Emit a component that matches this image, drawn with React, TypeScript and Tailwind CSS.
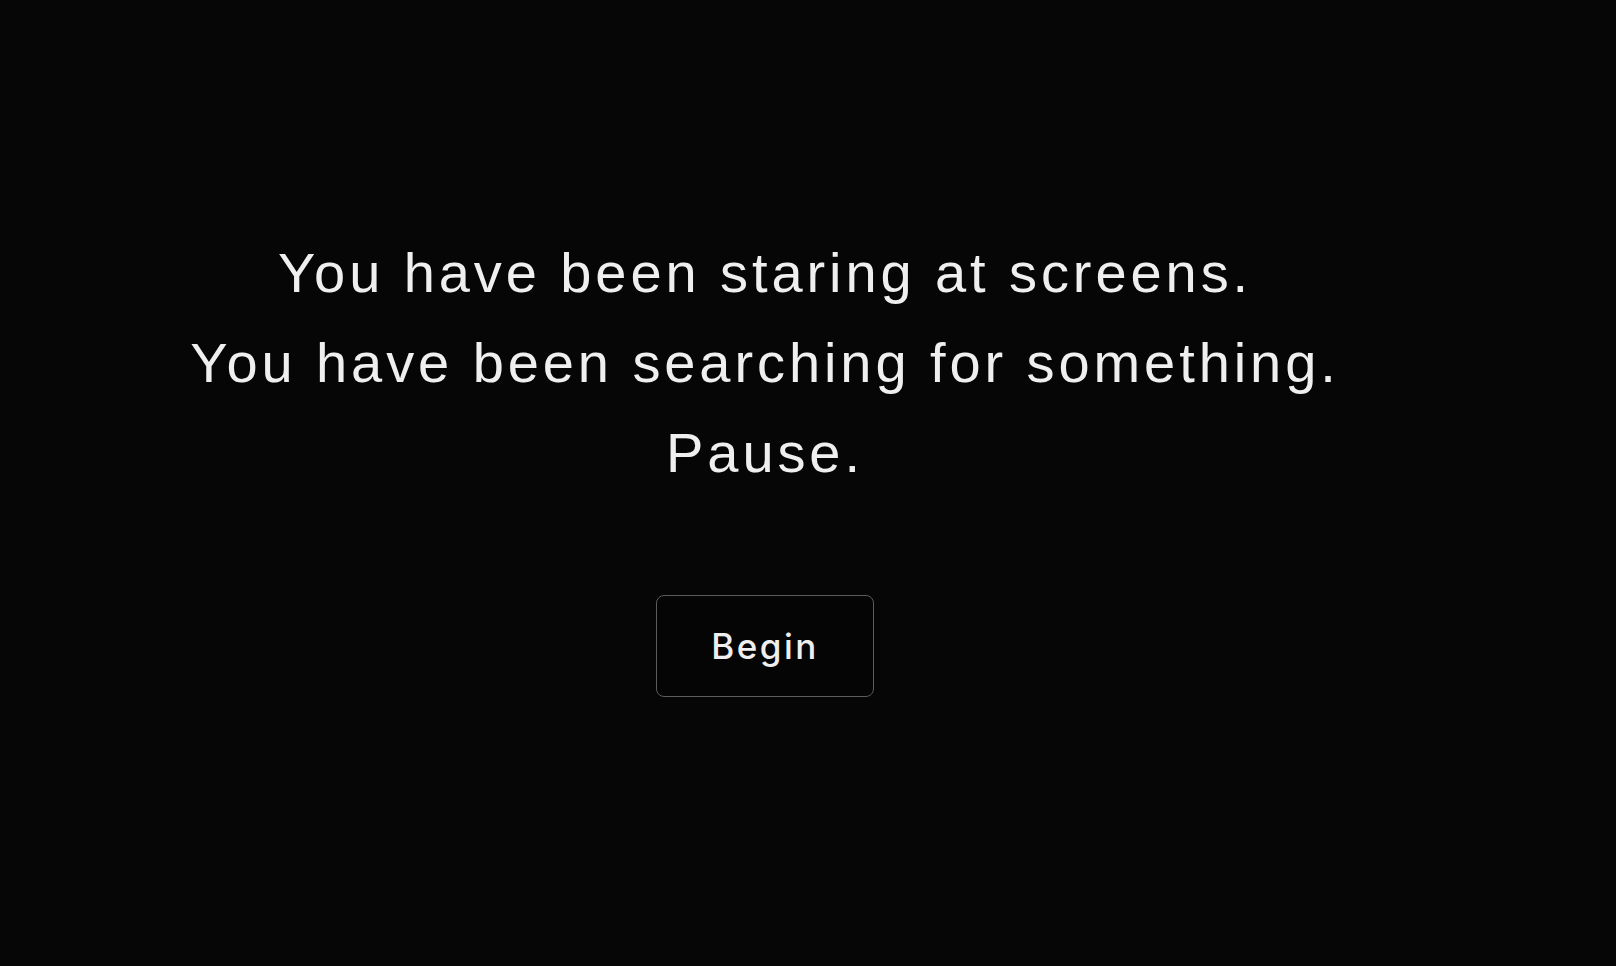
export default function App() {
  return (
    <div className="min-h-screen w-full bg-[#060606] text-[#efefef]">
      <main className="flex flex-col items-center pt-[228px] pr-[86px]">
        <div className="flex flex-col items-center text-center font-['Liberation_Sans',Arial,sans-serif] text-[56px] leading-[90px] tracking-[0.07em]">
          <p>You have been staring at screens.</p>
          <p>You have been searching for something.</p>
          <p>Pause.</p>
        </div>
        <button className="mt-[97px] flex h-[102px] w-[218px] items-center justify-center rounded-lg border border-[#5c5c5c] bg-[#050505] font-['Inter',sans-serif] text-[35px] font-medium tracking-[0.07em] text-[#efefef]">
          Begin
        </button>
      </main>
    </div>
  );
}
